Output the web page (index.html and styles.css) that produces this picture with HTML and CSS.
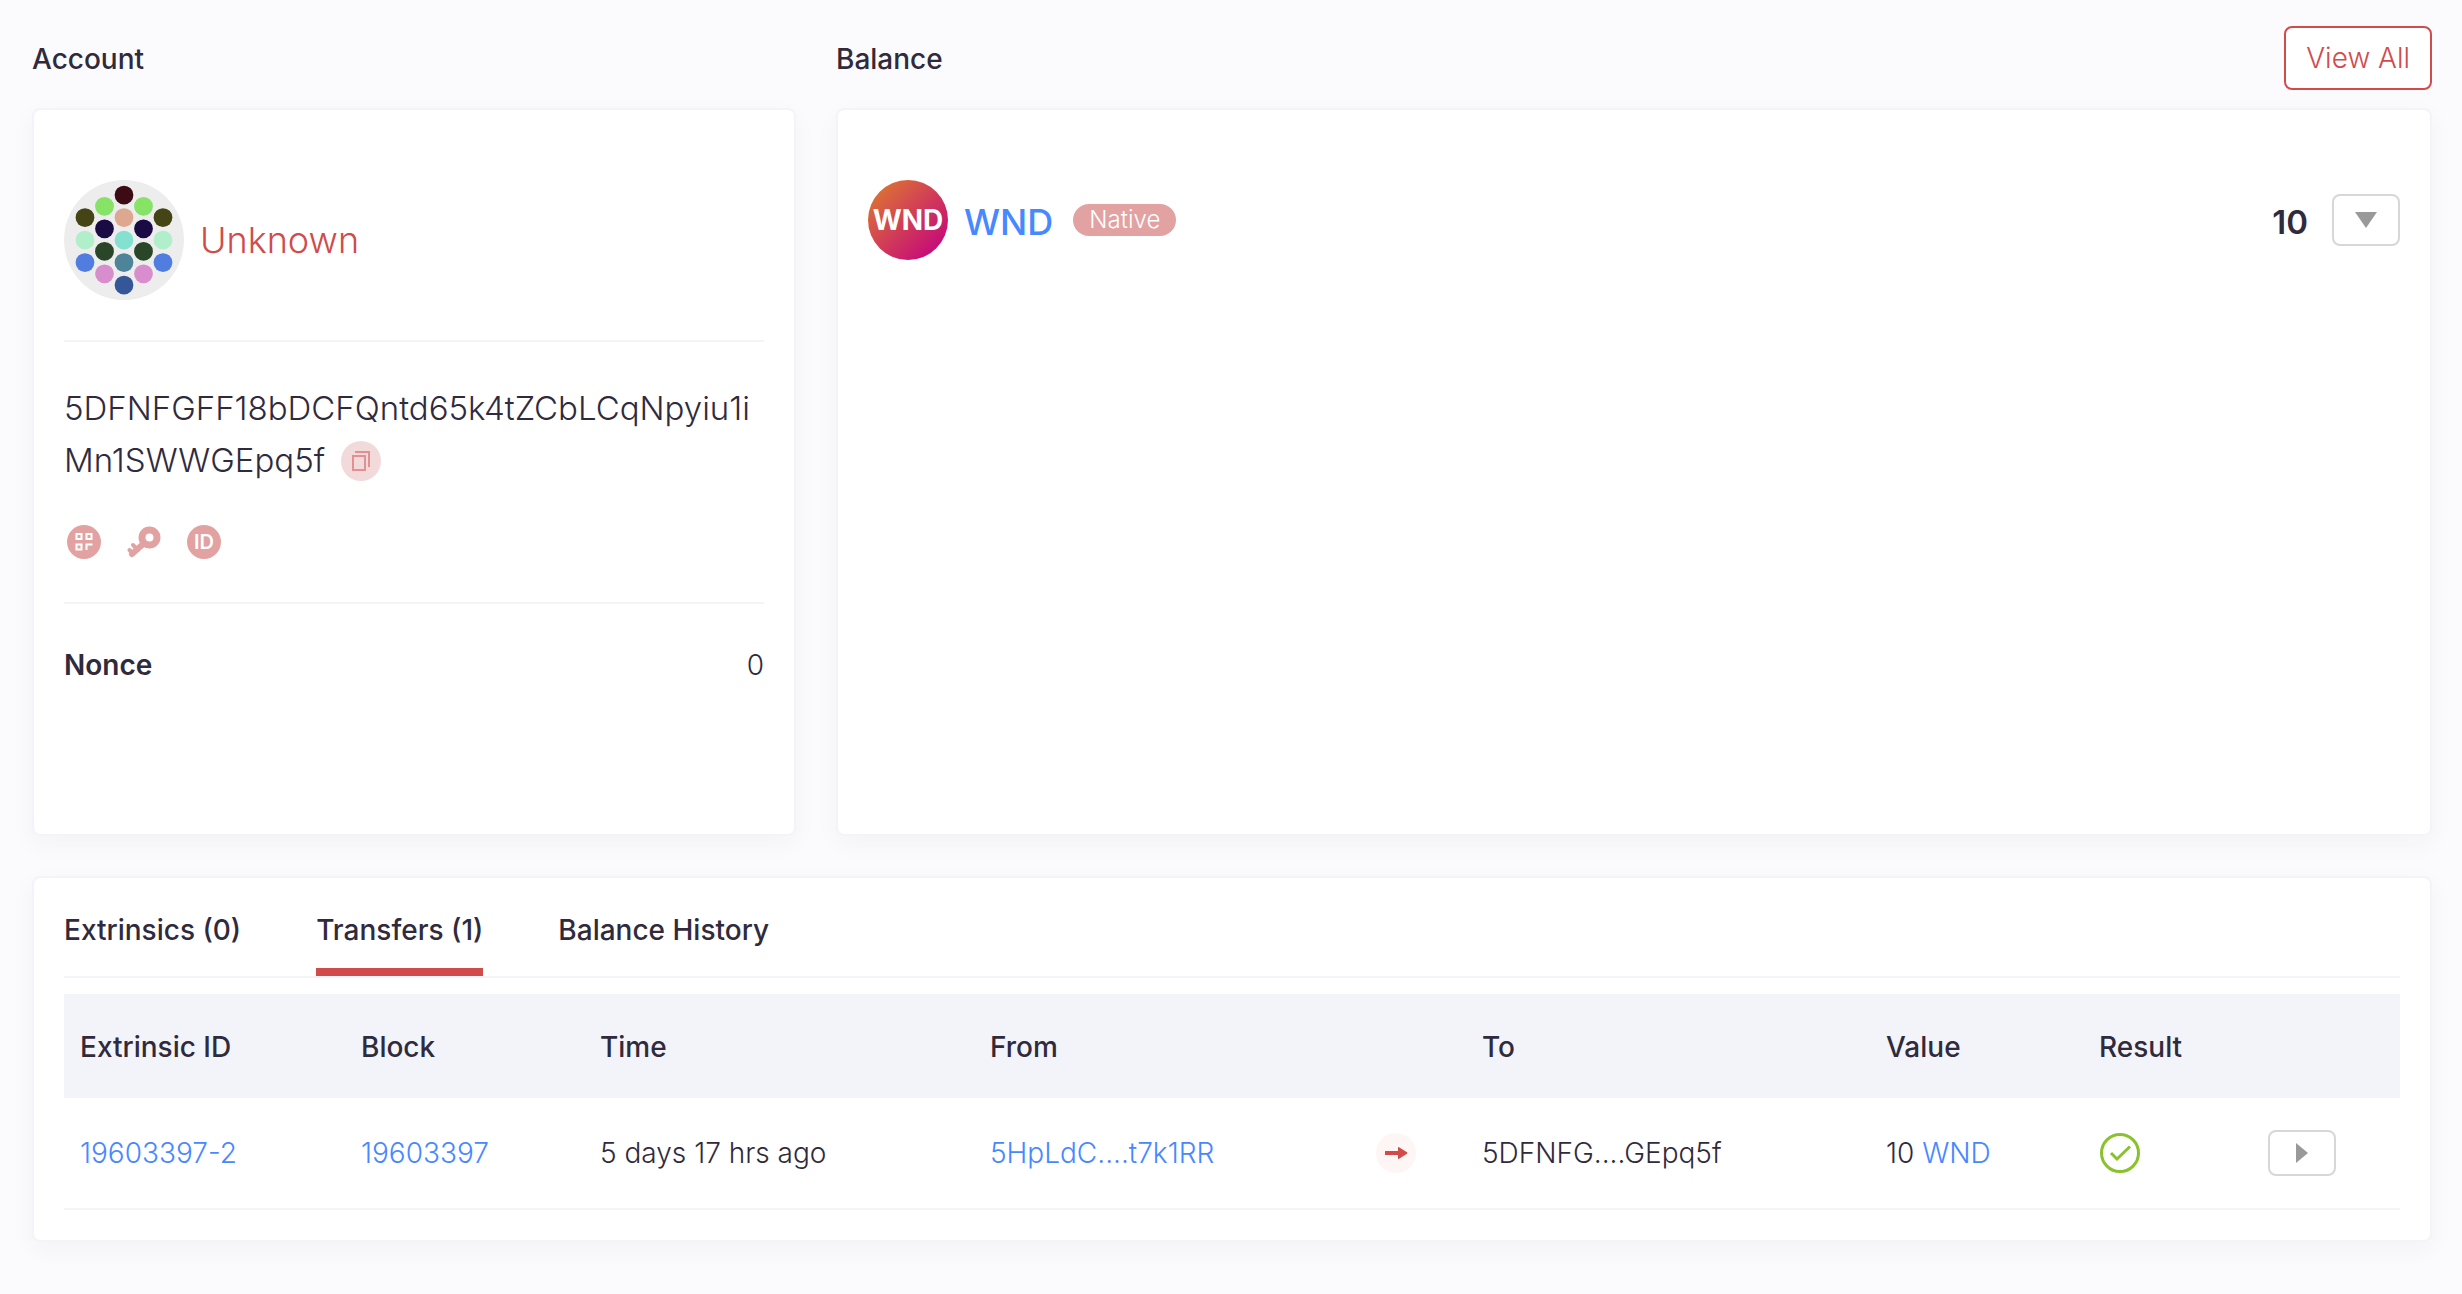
FILE: index.html
```html
<!DOCTYPE html>
<html lang="en">
<head>
<meta charset="utf-8">
<title>Account</title>
<link rel="stylesheet" href="styles.css">
</head>
<body>
<main class="page">
  <div class="overview">
    <section class="panel">
      <header class="panel-head"><h2 class="title">Account</h2></header>
      <div class="card account">
        <div class="identity">
          <svg class="avatar" viewBox="0 0 64 64" aria-hidden="true">
            <circle cx="32" cy="32" r="32" fill="#ededed"/>
            <g fill="#3c0b14"><circle cx="32" cy="8" r="5"/></g>
            <g fill="#86e366"><circle cx="21.6" cy="14" r="5"/><circle cx="42.4" cy="14" r="5"/></g>
            <g fill="#444415"><circle cx="11.2" cy="20" r="5"/><circle cx="52.8" cy="20" r="5"/></g>
            <g fill="#dea78f"><circle cx="32" cy="20" r="5"/></g>
            <g fill="#1b0b44"><circle cx="21.6" cy="26" r="5"/><circle cx="42.4" cy="26" r="5"/></g>
            <g fill="#b0efca"><circle cx="11.2" cy="32" r="5"/><circle cx="52.8" cy="32" r="5"/></g>
            <g fill="#84e1d0"><circle cx="32" cy="32" r="5"/></g>
            <g fill="#294629"><circle cx="21.6" cy="38" r="5"/><circle cx="42.4" cy="38" r="5"/></g>
            <g fill="#507ddf"><circle cx="11.2" cy="44" r="5"/><circle cx="52.8" cy="44" r="5"/></g>
            <g fill="#4e849a"><circle cx="32" cy="44" r="5"/></g>
            <g fill="#d88dcc"><circle cx="21.6" cy="50" r="5"/><circle cx="42.4" cy="50" r="5"/></g>
            <g fill="#355698"><circle cx="32" cy="56" r="5"/></g>
          </svg>
          <span class="name">Unknown</span>
        </div>
        <div class="address-block">
          <p class="address">5DFNFGFF18bDCFQntd65k4tZCbLCqNpyiu1i<wbr>Mn1SWWGEpq5f<button class="icon-btn copy" aria-label="Copy address"><svg width="40" height="40" viewBox="0 0 40 40"><circle cx="20" cy="20" r="20" fill="#f3dada"/><path d="M12 15h12v14H12zM14 11h14v15" fill="none" stroke="#e19191" stroke-width="2"/></svg></button></p>
          <div class="actions">
            <button class="icon-btn" aria-label="QR code"><svg width="40" height="40" viewBox="0 0 40 40"><circle cx="20" cy="20" r="17" fill="#e2a2a2"/><path d="M12.500 12h5v5h-5zM22.500 12h5v5h-5zM12.500 22.500h5v5h-5zM22.500 28v-5.500h6" fill="none" stroke="#fff" stroke-width="2"/></svg></button>
            <button class="icon-btn" aria-label="Public key"><svg width="40" height="40" viewBox="0 0 40 40"><path d="M18 23 8 32" stroke="#e2a2a2" stroke-width="6" stroke-linecap="round"/><path d="M9 23l5 5M5.500 28l3 3" stroke="#e2a2a2" stroke-width="4" stroke-linecap="round"/><circle cx="25.500" cy="15.500" r="7.500" fill="none" stroke="#e2a2a2" stroke-width="7"/></svg></button>
            <button class="icon-btn" aria-label="Identity"><span class="id-mark">ID</span></button>
          </div>
        </div>
        <dl class="nonce"><dt>Nonce</dt><dd>0</dd></dl>
      </div>
    </section>
    <section class="panel">
      <header class="panel-head"><h2 class="title">Balance</h2><button class="view-all">View All</button></header>
      <div class="card balance">
        <div class="token">
          <span class="token-logo">WND</span>
          <a class="token-name" href="#">WND</a>
          <span class="badge">Native</span>
          <span class="amount">10</span>
          <button class="toggle large" aria-label="Expand balance"><svg width="22" height="16" viewBox="0 0 22 16"><path d="M0 0h22L11 16z" fill="#999"/></svg></button>
        </div>
      </div>
    </section>
  </div>
  <section class="card history">
    <nav class="tabs">
      <a class="tab" href="#">Extrinsics (0)</a>
      <a class="tab active" href="#">Transfers (1)</a>
      <a class="tab" href="#">Balance History</a>
    </nav>
    <table class="transfers">
      <colgroup><col class="c-id"><col class="c-block"><col class="c-time"><col class="c-from"><col class="c-arrow"><col class="c-to"><col class="c-value"><col class="c-result"><col class="c-more"></colgroup>
      <thead>
        <tr><th>Extrinsic ID</th><th>Block</th><th>Time</th><th>From</th><th></th><th>To</th><th>Value</th><th>Result</th><th></th></tr>
      </thead>
      <tbody>
        <tr>
          <td><a href="#">19603397-2</a></td>
          <td><a href="#">19603397</a></td>
          <td>5 days 17 hrs ago</td>
          <td><a href="#">5HpLdC....t7k1RR</a></td>
          <td><svg width="40" height="40" viewBox="0 0 40 40"><circle cx="20" cy="20" r="20" fill="#fdf6f4"/><path d="M9 18h13v-3.500q0-1 1-.3l8 5.100q1 .7 0 1.400l-8 5.100q-1 .7-1-.3V22H9z" fill="#d14b4b"/></svg></td>
          <td>5DFNFG....GEpq5f</td>
          <td>10 <a href="#">WND</a></td>
          <td><svg width="42" height="40" viewBox="0 0 42 40"><g fill="none" stroke="#8ac22b" stroke-width="3"><circle cx="21" cy="20" r="18.500"/><path d="M12 20l6 6L31 13.500"/></g></svg></td>
          <td><button class="toggle" aria-label="Show details"><svg width="12" height="20" viewBox="0 0 12 20"><path d="M0 0v20l12-10z" fill="#999"/></svg></button></td>
        </tr>
      </tbody>
    </table>
  </section>
</main>
</body>
</html>
```
FILE: styles.css
```css
* { box-sizing: border-box; }
body {
  margin: 0;
  background: #fbfbfe;
  color: #302b3c;
  font: 300 28px/40px Inter, "Liberation Sans", sans-serif;
}
h2, p, dl, dd { margin: 0; }
a { color: #4788ff; text-decoration: none; }
button { font: inherit; cursor: pointer; }
svg { display: block; }

.page { padding: 8px 30px 52px 32px; }
.overview { display: grid; grid-template-columns: 764fr 1596fr; gap: 40px; }
.panel { display: flex; flex-direction: column; }
.panel-head { display: flex; align-items: center; justify-content: space-between; height: 100px; }
.title { padding-top: 2px; font-size: 28px; font-weight: 500; }
.view-all {
  height: 64px;
  padding: 0 20px;
  border: 2px solid #d14b4b;
  border-radius: 8px;
  background: #fff;
  color: #d14b4b;
}

.card {
  border: 2px solid #f3f3fa;
  border-radius: 8px;
  background: #fff;
  box-shadow: 0 8px 24px rgba(48, 43, 60, .04);
}
.account, .balance { min-height: 728px; padding: 0 30px; }
.identity { display: flex; align-items: center; gap: 16px; padding: 70px 0 40px; }
.avatar { width: 120px; height: 120px; }
.name { color: #d14b4b; font-size: 36px; }
.address-block { padding: 40px 0; border: solid #f3f3f8; border-width: 2px 0; }
.address { font-size: 33px; line-height: 52px; }
.icon-btn { display: block; padding: 0; border: 0; background: none; }
.copy { display: inline-block; height: 40px; margin-left: 16px; vertical-align: middle; }
.copy svg { margin-top: -4px; }
.actions { display: flex; gap: 20px; padding-top: 36px; }
.id-mark {
  display: block;
  width: 34px;
  margin: 3px;
  border-radius: 50%;
  background: #e2a2a2;
  color: #fff;
  font-size: 20px;
  font-weight: 600;
  line-height: 34px;
}
.nonce { display: flex; justify-content: space-between; padding-top: 41px; }
.nonce dt { font-weight: 600; }

.token { display: flex; align-items: center; padding-top: 70px; }
.token-logo {
  width: 80px;
  border-radius: 50%;
  background: linear-gradient(135deg, #dc7333 10%, #c70d77 85%);
  color: #fff;
  font-size: 28px;
  font-weight: 700;
  line-height: 80px;
  text-align: center;
}
.token-name { margin-left: 16px; padding-top: 4px; font-size: 36px; font-weight: 500; }
.badge {
  margin-left: 20px;
  padding: 0 16px;
  border-radius: 16px;
  background: #e2a2a2;
  color: #fff;
  font-size: 24px;
  line-height: 32px;
}
.amount { margin-left: auto; padding-top: 4px; font-size: 33px; font-weight: 600; }
.toggle {
  display: flex;
  align-items: center;
  justify-content: center;
  width: 68px;
  height: 46px;
  padding: 0;
  border: 2px solid #d7d7d7;
  border-radius: 8px;
  background: #fff;
}
.toggle.large { height: 52px; margin-left: 24px; }

.history { margin-top: 40px; padding: 0 30px 30px; }
.tabs { display: flex; gap: 75px; border-bottom: 2px solid #f3f3f8; }
.tab { padding: 32px 0 18px; border-bottom: 8px solid transparent; color: #302b3c; font-weight: 500; }
.tab.active { border-color: #d14b4b; }
.transfers { width: 100%; margin-top: 16px; table-layout: fixed; border-collapse: separate; border-spacing: 0; }
.c-id { width: 281px; }
.c-block { width: 239px; }
.c-time { width: 390px; }
.c-from { width: 386px; }
.c-arrow { width: 106px; }
.c-to { width: 404px; }
.c-value { width: 213px; }
.c-result { width: 169px; }
.c-more { width: 148px; }
.transfers th, .transfers td { padding: 0 16px; text-align: left; white-space: nowrap; }
.transfers th { height: 104px; padding-top: 2px; background: #f3f4fa; font-weight: 500; }
.transfers td { height: 112px; border-bottom: 2px solid #f3f3f8; }
```
